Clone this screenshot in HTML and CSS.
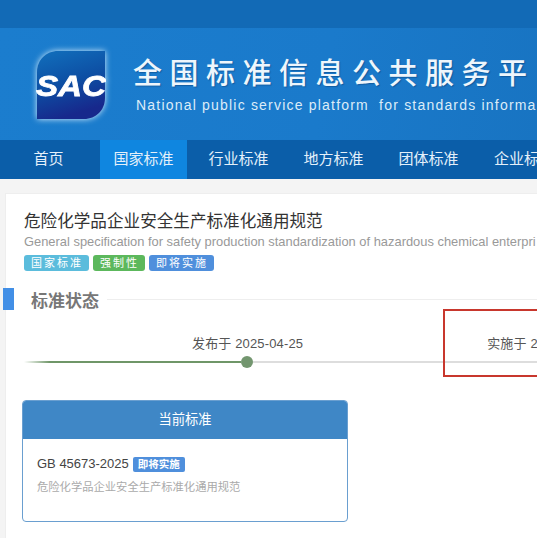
FILE: index.html
```html
<!DOCTYPE html>
<html lang="en">
<head>
    <meta charset="UTF-8">
    <meta name="viewport" content="width=device-width, initial-scale=1.0">
    <title>全国标准信息公共服务平台</title>
    <link rel="stylesheet" href="styles.css">
</head>
<body>
    <div class="top-band"></div>

    <!-- Banner -->
    <div class="banner">
        <svg class="logo" width="70" height="70" viewBox="0 0 70 70">
            <defs>
                <linearGradient id="logo-fill" x1="0" y1="0" x2="0.3" y2="1">
                    <stop offset="0" stop-color="#1170bd"/>
                    <stop offset="0.55" stop-color="#0d4ea3"/>
                    <stop offset="1" stop-color="#17288c"/>
                </linearGradient>
            </defs>
            <path d="M22 1H69V48C69 60 60 69 48 69H1V22C1 10 10 1 22 1Z" fill="url(#logo-fill)"/>
            <text class="logo-text" x="0" y="46" textLength="70" lengthAdjust="spacingAndGlyphs">SAC</text>
        </svg>
        <div class="banner-text">
            <div class="banner-title">全国标准信息公共服务平</div>
            <div class="banner-sub">National public service platform&nbsp; for standards informa</div>
        </div>
    </div>

    <!-- Nav -->
    <div class="nav">
        <a class="nav-item">首页</a>
        <a class="nav-item active">国家标准</a>
        <a class="nav-item">行业标准</a>
        <a class="nav-item">地方标准</a>
        <a class="nav-item">团体标准</a>
        <a class="nav-item nav-last">企业标</a>
    </div>

    <div class="panel">
        <div class="std-head">
            <h1>危险化学品企业安全生产标准化通用规范</h1>
            <div class="std-en">General specification for safety production standardization of hazardous chemical enterpri</div>
            <div class="tags">
                <span class="tag tag-info">国家标准</span>
                <span class="tag tag-green">强制性</span>
                <span class="tag tag-blue">即将实施</span>
            </div>
        </div>

        <div class="section-title">
            <span class="section-bar"></span>
            <span class="section-name">标准状态</span>
            <span class="section-line"></span>
        </div>

        <div class="timeline">
            <div class="timeline-labels">
                <span>发布于 2025-04-25</span>
                <span>实施于 2</span>
            </div>
            <div class="timeline-track">
                <span class="track-done"></span>
                <span class="track-dot"></span>
                <span class="track-rest"></span>
            </div>
            <div class="red-box"></div>
        </div>

        <div class="card">
            <div class="card-head">当前标准</div>
            <div class="card-body">
                <div class="card-code">GB 45673-2025 <span class="badge">即将实施</span></div>
                <div class="card-desc">危险化学品企业安全生产标准化通用规范</div>
            </div>
        </div>
    </div>
</body>
</html>
```

FILE: styles.css
```css
html, body {
    height: 100%;
}
body {
    margin: 0;
    width: 537px;
    height: 538px;
    overflow: hidden;
    background-color: #f4f4f4;
    font-family: "Liberation Sans", "Noto Sans CJK SC", sans-serif;
    color: #444444;
}
.top-band {
    height: 28px;
    background-color: #126ab6;
}
.banner {
    height: 112px;
    display: flex;
    align-items: center;
    gap: 27px;
    padding-left: 36px;
    background: linear-gradient(100deg, #1b7dce 0%, #1a7acb 60%, #1874c2 100%);
    white-space: nowrap;
}
.logo {
    flex: none;
    margin-top: 2px;
    filter: drop-shadow(0 0 3px #d6eefc);
}
.logo-text {
    font-family: "Liberation Sans", sans-serif;
    font-size: 30px;
    font-weight: bold;
    font-style: italic;
    fill: #ffffff;
    stroke: #ffffff;
    stroke-width: 0.8px;
}
.banner-title {
    font-size: 29px;
    line-height: 40px;
    letter-spacing: 7.5px;
    font-weight: 500;
    color: #eef6fc;
    text-shadow: 1px 1px 1px rgba(0, 40, 90, 0.35);
}
.banner-sub {
    margin-top: 2px;
    margin-left: 3px;
    font-size: 14px;
    line-height: 18px;
    letter-spacing: 1.2px;
    color: #dcecf8;
}
.nav {
    height: 39px;
    display: flex;
    gap: 8px;
    padding-left: 5px;
    background-color: #0b5ea9;
    white-space: nowrap;
}
.nav-item {
    flex: none;
    width: 87px;
    text-align: center;
    font-size: 15px;
    line-height: 38px;
    color: #e4f0fa;
}
.nav-item.active {
    background-color: #0f86e0;
}
.nav-item.nav-last {
    width: 45px;
    margin-left: 14px;
    text-align: left;
}
.panel {
    margin: 14px 0 0 5px;
    height: 345px;
    background: #ffffff;
    border: 1px solid #eeeeee;
    border-right: none;
    white-space: nowrap;
}
.std-head {
    padding: 17px 0 0 18px;
}
h1 {
    margin: 0;
    font-size: 16.6px;
    line-height: 22px;
    font-weight: normal;
    color: #333333;
}
.std-en {
    margin-top: 1px;
    font-size: 12.9px;
    line-height: 16px;
    color: #999999;
}
.tags {
    display: flex;
    gap: 4px;
    margin-top: 5px;
}
.tag {
    height: 16px;
    padding: 0 6px 0 7px;
    border-radius: 3px;
    font-size: 11px;
    line-height: 16px;
    letter-spacing: 2px;
    color: #ffffff;
}
.tag-info {
    background-color: #5bbcdc;
}
.tag-green {
    background-color: #5cb85c;
}
.tag-blue {
    background-color: #4f8fdc;
}
.section-title {
    display: flex;
    align-items: center;
    height: 22px;
    margin: 17px 0 0 -3px;
}
.section-bar {
    width: 11px;
    height: 22px;
    background-color: #428fe6;
}
.section-name {
    margin: 0 8px 0 17px;
    font-size: 17px;
    font-weight: bold;
    color: #777777;
}
.section-line {
    flex: 1;
    height: 1px;
    background-color: #eeeeee;
}
.timeline {
    position: relative;
    height: 90px;
}
.timeline-labels {
    display: flex;
    gap: 184px;
    padding: 25px 0 0 186px;
    font-size: 13px;
    line-height: 17px;
    letter-spacing: 0.15px;
    color: #555555;
}
.timeline-track {
    display: flex;
    align-items: center;
    height: 12px;
    margin-top: 4px;
    padding-left: 18px;
}
.track-done {
    width: 217px;
    height: 2px;
    background: linear-gradient(90deg, #ffffff 0%, #6f9668 12%, #6f9668 100%);
}
.track-dot {
    flex: none;
    width: 12px;
    height: 12px;
    border-radius: 50%;
    background-color: #73966f;
}
.track-rest {
    flex: 1;
    height: 2px;
    background-color: #dddddd;
}
/* red annotation over the timeline */
.red-box {
    position: absolute;
    left: 437px;
    top: -1px;
    width: 120px;
    height: 64px;
    border: 2px solid #c8372d;
}
.card {
    width: 326px;
    height: 122px;
    box-sizing: border-box;
    margin-left: 16px;
    border: 1px solid #6a9fd0;
    border-radius: 4px;
    overflow: hidden;
}
.card-head {
    height: 38px;
    background-color: #3f87c6;
    text-align: center;
    font-size: 13.3px;
    line-height: 37px;
    color: #ffffff;
}
.card-body {
    padding: 16px 14px 0;
}
.card-code {
    display: flex;
    align-items: center;
    gap: 4px;
    font-size: 13px;
    line-height: 17px;
    color: #444444;
}
.badge {
    height: 15px;
    padding: 0 5px;
    margin-top: 2px;
    border-radius: 2px;
    background-color: #4f8fdc;
    font-size: 10.5px;
    line-height: 15px;
    font-weight: bold;
    color: #ffffff;
}
.card-desc {
    margin-top: 7px;
    font-size: 11.3px;
    line-height: 16px;
    color: #aaaaaa;
}
```
